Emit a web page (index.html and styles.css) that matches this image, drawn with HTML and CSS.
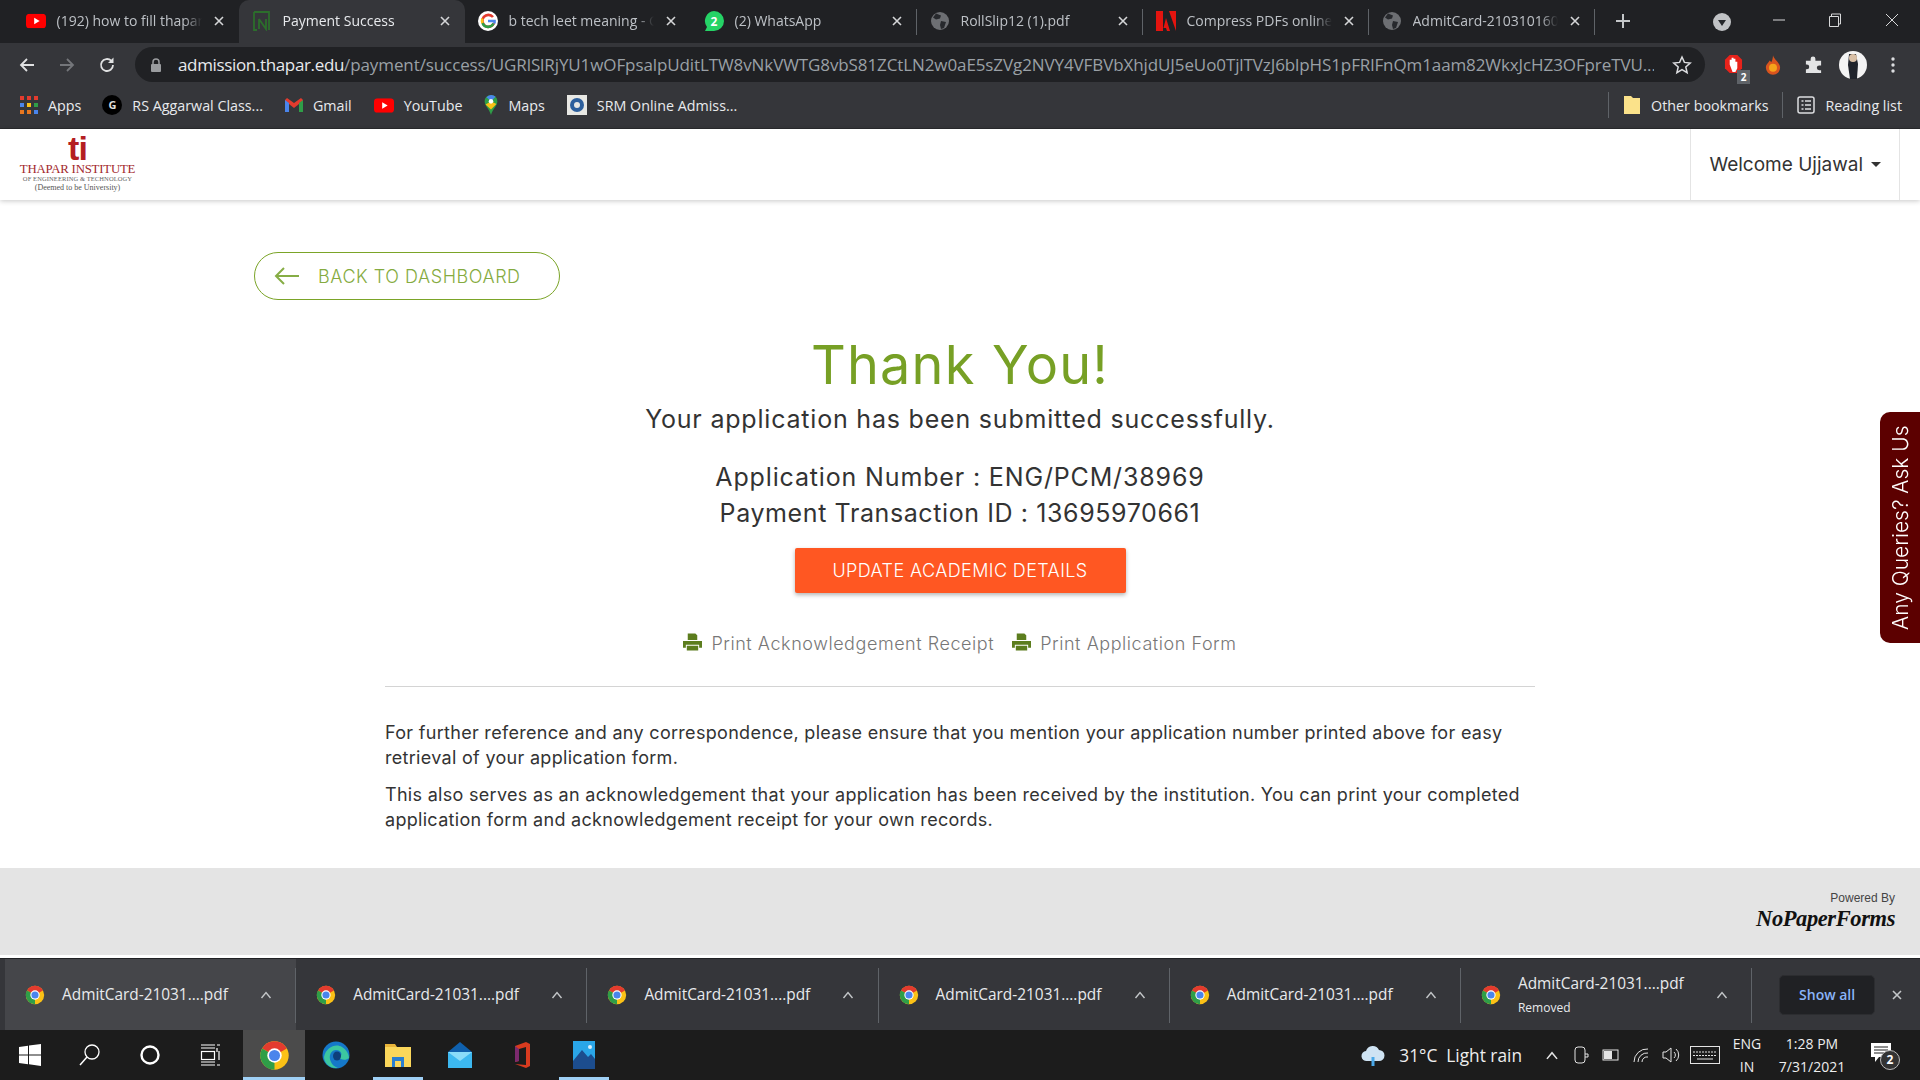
FILE: index.html
```html
<!DOCTYPE html>
<html lang="en">
<head>
<meta charset="utf-8">
<title>Payment Success</title>
<link rel="stylesheet" href="styles.css">
</head>
<body>
<svg class="defs" width="0" height="0" aria-hidden="true">
  <defs>
    <symbol id="chrome" viewBox="0 0 24 24">
      <circle cx="12" cy="12" r="11" fill="#fbc116"/>
      <path d="M12 12L2.47 6.5A11 11 0 0 1 21.53 6.5Z" fill="#e33b2e"/>
      <path d="M12 12L12 23A11 11 0 0 1 2.47 6.5Z" fill="#2f9e48"/>
      <circle cx="12" cy="12" r="5.6" fill="#fff"/>
      <circle cx="12" cy="12" r="4.3" fill="#4a85ec"/>
    </symbol>
    <symbol id="globe" viewBox="0 0 20 20">
      <circle cx="10" cy="10" r="9" fill="#6d6f73"/>
      <path d="M6 2.5l5 2-1 3-4 1-3-2zM11 10l5 1-2 6-3 1-1-4z" fill="#27292d"/>
    </symbol>
    <symbol id="printer" viewBox="0 0 20 18">
      <path d="M5 0h8l2 2v5H5zM0 8h20v7h-3v-3H3v3H0zM4 13h12v5H4z" fill="#5c7d1e"/>
    </symbol>
    <symbol id="yt" viewBox="0 0 22 16">
      <rect width="22" height="16" rx="4" fill="#f00"/>
      <path d="M9 4.5l6 3.5-6 3.500z" fill="#fff"/>
    </symbol>
    <symbol id="close" viewBox="0 0 12 12">
      <path d="M2 2l8 8M10 2l-8 8" stroke="currentColor" stroke-width="1.600" fill="none"/>
    </symbol>
    <symbol id="caret" viewBox="0 0 12 8">
      <path d="M1.500 7L6 1.500 10.500 7" stroke="currentColor" stroke-width="1.400" fill="none"/>
    </symbol>
  </defs>
</svg>

<div class="browser">
  <div class="tabstrip">
    <div class="tab">
      <svg class="fav" viewBox="0 0 22 16"><use href="#yt"/></svg>
      <span class="tab-title">(192) how to fill thapar form</span>
      <svg class="tab-x"><use href="#close"/></svg>
    </div>
    <div class="tab tab-active">
      <svg class="fav" viewBox="0 0 18 20"><path d="M1 1h15v18M1 1v18h3M6 8v10M6 8l7 10V8" fill="none" stroke="#2c6e2c" stroke-width="1.800"/></svg>
      <span class="tab-title">Payment Success</span>
      <svg class="tab-x"><use href="#close"/></svg>
    </div>
    <div class="tab">
      <svg class="fav" viewBox="0 0 20 20"><circle cx="10" cy="10" r="10" fill="#fff"/><path d="M15 6a6 6 0 1 0 1 6" fill="none" stroke="#e33b2e" stroke-width="2.600"/><path d="M4.500 12a6 6 0 0 0 11 .5" fill="none" stroke="#2f9e48" stroke-width="2.600"/><path d="M4.500 7.500a6 6 0 0 0 0 4.500" fill="none" stroke="#fbc116" stroke-width="2.600"/><path d="M10 10h6.500v2.500" fill="none" stroke="#4a85ec" stroke-width="2.600"/></svg>
      <span class="tab-title">b tech leet meaning - Google</span>
      <svg class="tab-x"><use href="#close"/></svg>
    </div>
    <div class="tab tab-sep">
      <svg class="fav" viewBox="0 0 20 20"><path d="M10 0a10 10 0 0 1 0 20H1l2-4a10 10 0 0 1 7-16z" fill="#25d366"/><text x="10" y="14.500" class="wa-num">2</text></svg>
      <span class="tab-title">(2) WhatsApp</span>
      <svg class="tab-x"><use href="#close"/></svg>
    </div>
    <div class="tab tab-sep">
      <svg class="fav"><use href="#globe"/></svg>
      <span class="tab-title">RollSlip12 (1).pdf</span>
      <svg class="tab-x"><use href="#close"/></svg>
    </div>
    <div class="tab tab-sep">
      <svg class="fav" viewBox="0 0 20 20"><path d="M0 0h7v20H2.500L0 20zM13 0h7v20zM10 7l4 13h-3l-1-3H7.500z" fill="#e4140f"/></svg>
      <span class="tab-title">Compress PDFs online for free</span>
      <svg class="tab-x"><use href="#close"/></svg>
    </div>
    <div class="tab tab-sep tab-last">
      <svg class="fav"><use href="#globe"/></svg>
      <span class="tab-title">AdmitCard-21031016099.pdf</span>
      <svg class="tab-x"><use href="#close"/></svg>
    </div>
    <svg class="newtab" viewBox="0 0 16 16"><path d="M8 1v14M1 8h14" stroke="#c4c7c9" stroke-width="2"/></svg>
    <div class="winctl">
      <svg class="tabsearch" viewBox="0 0 18 18"><circle cx="9" cy="9" r="9" fill="#c0c2c5"/><path d="M5 7h8l-4 6z" fill="#24262a"/></svg>
      <svg class="wbtn wmin" viewBox="0 0 14 14"><path d="M1 7h12" stroke="#d8d9da" stroke-width="1"/></svg>
      <svg class="wbtn wmax" viewBox="0 0 14 14"><path d="M1.500 3.500h9v10h-9zM3.500 3.500v-2.500h9v10h-2" fill="none" stroke="#d8d9da" stroke-width="1"/></svg>
      <svg class="wbtn wclose" viewBox="0 0 14 14"><path d="M1 1l12 12M13 1L1 13" stroke="#d8d9da" stroke-width="1"/></svg>
    </div>
  </div>

  <div class="toolbar">
    <svg class="nav" viewBox="0 0 18 18"><path d="M16 9H3M9 3L3 9l6 6" fill="none" stroke="#e0e1e2" stroke-width="1.800"/></svg>
    <svg class="nav nav-off" viewBox="0 0 18 18"><path d="M2 9h13M9 3l6 6-6 6" fill="none" stroke="#74767a" stroke-width="1.800"/></svg>
    <svg class="nav" viewBox="0 0 18 18"><path d="M15 9a6 6 0 1 1-1.800-4.300" fill="none" stroke="#e0e1e2" stroke-width="1.800"/><path d="M15.500 1.500v5.500h-5.500z" fill="#e0e1e2"/></svg>
    <div class="omnibox">
      <svg class="lock" viewBox="0 0 12 14"><path d="M3 6V4a3 3 0 0 1 6 0v2" fill="none" stroke="#9a9c9f" stroke-width="1.500"/><rect x="1" y="6" width="10" height="8" rx="1" fill="#9a9c9f"/></svg>
      <div class="url"><span class="url-host">admission.thapar.edu</span>/payment/success/UGRlSlRjYU1wOFpsalpUditLTW8vNkVWTG8vbS81ZCtLN2w0aE5sZVg2NVY4VFBVbXhjdUJ5eUo0TjlTVzJ6blpHS1pFRlFnQm1aam82WkxJcHZ3OFpreTVU...</div>
      <svg class="star" viewBox="0 0 20 20"><path d="M10 2l2.400 5.400 5.800.6-4.400 3.900 1.300 5.800L10 14.700l-5.100 3 1.300-5.800L1.800 8l5.800-.6z" fill="none" stroke="#dcdde0" stroke-width="1.500"/></svg>
    </div>
    <div class="exts">
      <span class="ext ext-badge">
        <svg class="ext-svg" viewBox="0 0 20 22"><path d="M6 1h8l5 5v9l-5 5H6l-5-5V6z" fill="#e8231b"/><path d="M6 11V6h2v4-6h2v6-5h2v6-3h2v7l-2 4H9z" fill="#fff"/></svg>
        <span class="ext-num">2</span>
      </span>
      <span class="ext">
        <svg class="ext-svg ext-small" viewBox="0 0 18 22"><path d="M9 0c1 5 8 8 8 14a8 8 0 0 1-16 0c0-4 3-5 4-8 1 1 2 1 2 2 1-2 2-5 2-8z" fill="#d9541e"/><circle cx="9" cy="14" r="4.500" fill="#f5a31b"/></svg>
      </span>
      <span class="ext">
        <svg class="ext-svg" viewBox="0 0 20 20"><path d="M2 6h5V4a2.500 2.500 0 0 1 5 0v2h6v5h-2a2.500 2.500 0 0 0 0 5h2v3H2v-4h1a2.500 2.500 0 0 0 0-5H2z" fill="#e3e4e5"/></svg>
      </span>
      <span class="ext">
        <svg class="avatar" viewBox="0 0 28 28"><circle cx="14" cy="14" r="14" fill="#f4f4f4"/><path d="M10 3h7l2 10-1 15h-7l-2-14z" fill="#20242c"/><circle cx="14" cy="7" r="4" fill="#d9c0a6"/></svg>
      </span>
      <svg class="dots" viewBox="0 0 4 18"><circle cx="2" cy="3" r="1.700" fill="#dcdde0"/><circle cx="2" cy="9" r="1.700" fill="#dcdde0"/><circle cx="2" cy="15" r="1.700" fill="#dcdde0"/></svg>
    </div>
  </div>

  <div class="bookmarks">
    <div class="bm bm-apps">
      <svg class="bm-ico" viewBox="0 0 18 18"><g fill="#e33b2e"><rect width="4" height="4"/><rect x="7" width="4" height="4"/><rect x="14" width="4" height="4"/></g><g fill="#4a85ec"><rect y="7" width="4" height="4"/></g><g fill="#fbc116"><rect x="7" y="7" width="4" height="4"/></g><g fill="#2f9e48"><rect x="14" y="7" width="4" height="4"/></g><g fill="#e9771f"><rect y="14" width="4" height="4"/><rect x="7" y="14" width="4" height="4"/></g><rect x="14" y="14" width="4" height="4" fill="#4a85ec"/></svg>
      <span>Apps</span>
    </div>
    <div class="bm">
      <span class="bm-g">G</span>
      <span>RS Aggarwal Class...</span>
    </div>
    <div class="bm">
      <svg class="bm-ico" viewBox="0 0 18 14"><path d="M0 2v12h4V6l5 4 5-4v8h4V2l-2-2-7 5-7-5z" fill="#e33b2e"/><path d="M0 2v12h4V5z" fill="#4a85ec"/><path d="M14 5v9h4V2z" fill="#2f9e48"/></svg>
      <span>Gmail</span>
    </div>
    <div class="bm">
      <svg class="bm-ico bm-yt" viewBox="0 0 22 16"><use href="#yt"/></svg>
      <span>YouTube</span>
    </div>
    <div class="bm">
      <svg class="bm-ico bm-map" viewBox="0 0 14 22"><path d="M7 0a7 7 0 0 1 7 7c0 5-5 8-7 15C5 15 0 12 0 7a7 7 0 0 1 7-7z" fill="#2f9e48"/><path d="M2 2.500A7 7 0 0 1 7 0a7 7 0 0 1 5 2L7 7z" fill="#4a85ec"/><path d="M1 10.500L7 7l6 3-6 6z" fill="#fbc116"/><circle cx="7" cy="7" r="2.500" fill="#fff"/></svg>
      <span>Maps</span>
    </div>
    <div class="bm">
      <svg class="bm-ico bm-srm" viewBox="0 0 20 20"><rect width="20" height="20" fill="#e8e8e4"/><circle cx="10" cy="10" r="7" fill="#2d5f9c"/><circle cx="10" cy="10" r="3" fill="#e8e8e4"/></svg>
      <span>SRM Online Admiss...</span>
    </div>
    <div class="bm-right">
      <span class="bm-sep"></span>
      <div class="bm">
        <svg class="bm-ico" viewBox="0 0 16 18"><path d="M0 0h7l2 2h7v16H0z" fill="#fbe28a"/></svg>
        <span>Other bookmarks</span>
      </div>
      <span class="bm-sep"></span>
      <div class="bm">
        <svg class="bm-ico" viewBox="0 0 18 18"><rect x="1" y="1" width="16" height="16" rx="2" fill="none" stroke="#dcdde0" stroke-width="1.500"/><path d="M4.500 5h2M8 5h6M4.500 9h2M8 9h6M4.500 13h2M8 13h6" stroke="#dcdde0" stroke-width="1.500"/></svg>
        <span>Reading list</span>
      </div>
    </div>
  </div>

  <div class="page">
    <header class="site-head">
      <div class="logo">
        <span class="logo-ti">ti</span>
        <span class="logo-name">THAPAR INSTITUTE</span>
        <span class="logo-sub">OF ENGINEERING &amp; TECHNOLOGY</span>
        <span class="logo-deemed">(Deemed to be University)</span>
      </div>
      <div class="welcome">Welcome Ujjawal <span class="welcome-caret"></span></div>
    </header>

    <main class="main">
      <div class="back-row">
        <a class="back-btn">
          <svg class="back-arrow" viewBox="0 0 26 20"><path d="M26 10H3M11 2l-8 8 8 8" fill="none" stroke="#86ad45" stroke-width="2"/></svg>
          <span>BACK TO DASHBOARD</span>
        </a>
      </div>
      <h1 class="thanks">Thank You!</h1>
      <p class="sub">Your application has been submitted successfully.</p>
      <div class="ids">
        <p class="id-line">Application Number : ENG/PCM/38969</p>
        <p class="id-line id-pay">Payment Transaction ID : 13695970661</p>
      </div>
      <a class="update-btn">UPDATE ACADEMIC DETAILS</a>
      <div class="prints">
        <a class="print-link"><svg class="print-ico"><use href="#printer"/></svg>Print Acknowledgement Receipt</a>
        <a class="print-link"><svg class="print-ico"><use href="#printer"/></svg>Print Application Form</a>
      </div>
      <hr class="rule">
      <div class="notes">
        <p>For further reference and any correspondence, please ensure that you mention your application number printed above for easy retrieval of your application form.</p>
        <p>This also serves as an acknowledgement that your application has been received by the institution. You can print your completed application form and acknowledgement receipt for your own records.</p>
      </div>
    </main>

    <footer class="site-foot">
      <div class="powered">
        <span class="powered-by">Powered By</span>
        <span class="npf">NoPaperForms</span>
      </div>
    </footer>

    <a class="ask-tab">Any Queries? Ask Us</a>
  </div>

  <div class="downloads">
    <div class="dl dl-hover"><svg class="dl-ico"><use href="#chrome"/></svg><span class="dl-name">AdmitCard-21031....pdf</span><svg class="dl-caret"><use href="#caret"/></svg></div>
    <div class="dl"><svg class="dl-ico"><use href="#chrome"/></svg><span class="dl-name">AdmitCard-21031....pdf</span><svg class="dl-caret"><use href="#caret"/></svg></div>
    <div class="dl"><svg class="dl-ico"><use href="#chrome"/></svg><span class="dl-name">AdmitCard-21031....pdf</span><svg class="dl-caret"><use href="#caret"/></svg></div>
    <div class="dl"><svg class="dl-ico"><use href="#chrome"/></svg><span class="dl-name">AdmitCard-21031....pdf</span><svg class="dl-caret"><use href="#caret"/></svg></div>
    <div class="dl"><svg class="dl-ico"><use href="#chrome"/></svg><span class="dl-name">AdmitCard-21031....pdf</span><svg class="dl-caret"><use href="#caret"/></svg></div>
    <div class="dl dl-last"><svg class="dl-ico"><use href="#chrome"/></svg><span class="dl-stack"><span class="dl-name">AdmitCard-21031....pdf</span><span class="dl-status">Removed</span></span><svg class="dl-caret"><use href="#caret"/></svg></div>
    <a class="show-all">Show all</a>
    <svg class="dl-close"><use href="#close"/></svg>
  </div>

  <div class="taskbar">
    <div class="tb-sys">
      <svg class="tb-sys-ico" viewBox="0 0 22 22"><path d="M0 3l9-1.300V10.500H0zM10 1.500L22 0v10.500H10zM0 11.500h9v8.800L0 19zM10 11.500h12V22l-12-1.700z" fill="#fff"/></svg>
    </div>
    <div class="tb-sys">
      <svg class="tb-sys-ico" viewBox="0 0 22 22"><circle cx="13" cy="8" r="7" fill="none" stroke="#fff" stroke-width="1.300"/><path d="M8 13l-7 8" stroke="#fff" stroke-width="1.500"/></svg>
    </div>
    <div class="tb-sys">
      <svg class="tb-sys-ico" viewBox="0 0 22 22"><circle cx="11" cy="11" r="8.500" fill="none" stroke="#fff" stroke-width="2.400"/></svg>
    </div>
    <div class="tb-sys">
      <svg class="tb-sys-ico" viewBox="0 0 22 22"><path d="M2 1h14M18 1h3M2 21h14M18 21h3M2 4h14M18 4v4M2 18h14" stroke="#fff" stroke-width="1.200" fill="none"/><rect x="2.500" y="7.500" width="13" height="8" fill="none" stroke="#fff" stroke-width="1.200"/><path d="M20 7v9" stroke="#fff" stroke-width="1.200"/></svg>
    </div>
    <div class="tb-app tb-active tb-open"><svg class="tb-app-ico tb-chrome"><use href="#chrome"/></svg></div>
    <div class="tb-app">
      <svg class="tb-app-ico" viewBox="0 0 28 28"><circle cx="14" cy="14" r="13.500" fill="#1578c9"/><path d="M2 16c2-10 12-14 18-10 5 3 7 8 7 11-3 3-9 2-10-1 4-1 3-7-3-7-5 0-8 6-5 12 1 3 4 5 7 6-8 1-14-5-14-11z" fill="#3cc7a0"/><ellipse cx="15" cy="15" rx="4" ry="4.500" fill="#0e3e7b"/></svg>
    </div>
    <div class="tb-app tb-open">
      <svg class="tb-app-ico" viewBox="0 0 28 28"><path d="M1 3h10l2 3h14v20H1z" fill="#e8b43a"/><rect x="1" y="6" width="26" height="20" fill="#fbd75b"/><path d="M8 26v-10h12v10h-3v-6h-6v6z" fill="#2a7fd1"/></svg>
    </div>
    <div class="tb-app">
      <svg class="tb-app-ico" viewBox="0 0 28 28"><path d="M14 1l12 10H2z" fill="#0f60ad"/><rect x="2" y="11" width="24" height="16" fill="#3cb8f0"/><path d="M2 11l12 9 12-9z" fill="#8adcf9"/></svg>
    </div>
    <div class="tb-app">
      <svg class="tb-app-ico" viewBox="0 0 28 28"><path d="M7 5l11-4 4 2v22l-4 2-11-4 11 1V6l-7 2v12l-4 1z" fill="#d83b1f"/><path d="M7 5l4 3v12l-4 1z" fill="#7c2a6e"/></svg>
    </div>
    <div class="tb-app tb-open">
      <svg class="tb-app-ico" viewBox="0 0 28 28"><rect x="3" y="0" width="22" height="28" fill="#2aa6e8"/><path d="M3 20l9-11 6 7 3-3 4 5v10H3z" fill="#1c4d8e"/><circle cx="20" cy="6" r="2" fill="#d8eefb"/></svg>
    </div>
    <div class="tray">
      <svg class="tray-cloud" viewBox="0 0 26 24"><path d="M7 18a5 5 0 0 1-1-10 7 7 0 0 1 13-1 5.500 5.500 0 0 1 0 11z" fill="#cfe3f3"/><path d="M13 14v9" stroke="#4aa8e8" stroke-width="3"/></svg>
      <span class="tray-weather">31°C&nbsp; Light rain</span>
      <svg class="tray-caret"><use href="#caret"/></svg>
      <svg class="tray-ico" viewBox="0 0 18 18"><rect x="3" y="1" width="10" height="16" rx="3" fill="none" stroke="#e4e4e4"/><path d="M13 8h3v3h-3" fill="none" stroke="#e4e4e4"/></svg>
      <svg class="tray-ico" viewBox="0 0 18 18"><rect x="1" y="4" width="15" height="10" fill="none" stroke="#e4e4e4"/><rect x="2" y="5" width="8" height="8" fill="#e4e4e4"/></svg>
      <svg class="tray-ico" viewBox="0 0 18 18"><path d="M2 16a13 13 0 0 1 14-13M6 16a9 9 0 0 1 10-9M10 16a5 5 0 0 1 6-5" fill="none" stroke="#e4e4e4"/></svg>
      <svg class="tray-ico" viewBox="0 0 18 18"><path d="M1 6h3l5-4v14l-5-4H1zM12 6a4 4 0 0 1 0 6M14 3a8 8 0 0 1 0 12" fill="none" stroke="#e4e4e4"/></svg>
      <svg class="tray-kbd" viewBox="0 0 30 18"><rect x=".5" y=".5" width="29" height="17" fill="none" stroke="#e4e4e4"/><path d="M3 6h24M3 9.500h24" stroke="#e4e4e4" stroke-dasharray="2 1"/><path d="M7 13h16" stroke="#e4e4e4"/></svg>
      <div class="tray-lang"><span>ENG</span><span>IN</span></div>
      <div class="tray-clock"><span>1:28 PM</span><span>7/31/2021</span></div>
      <div class="tray-note">
        <svg class="tray-note-ico" viewBox="0 0 20 20"><path d="M0 0h20v14H8l-4 5v-5H0z" fill="#fff"/><path d="M3 4h14M3 7h14M3 10h14" stroke="#1c1c1c"/></svg>
        <span class="tray-badge">2</span>
      </div>
    </div>
  </div>
</div>
</body>
</html>
```
FILE: styles.css
```css
* { box-sizing: border-box; }
html, body { margin: 0; height: 100%; overflow: hidden; }
body { font-family: "Open Sans", "Noto Sans", sans-serif; background: #fff; }
.defs { position: absolute; }
p, h1 { margin: 0; }

.browser { width: 1920px; height: 1080px; display: flex; flex-direction: column; }

/* tab strip */
.tabstrip { height: 43px; background: #202124; display: flex; padding-left: 13px; color: #bdc1c6; font-size: 14px; flex: none; }
.tab { width: 226px; height: 43px; display: flex; align-items: center; padding: 0 0 2px 13px; position: relative; }
.tab-active { background: #35363a; border-radius: 10px 10px 0 0; color: #e8eaed; }
.tab-sep::after { content: ""; position: absolute; right: 0; top: 9px; height: 26px; width: 1px; background: #5f6368; }
.fav { width: 20px; height: 20px; flex: none; }
.wa-num { font: 700 12px "Open Sans", sans-serif; fill: #fff; text-anchor: middle; }
.tab-title { width: 145px; margin-left: 10.500px; white-space: nowrap; overflow: hidden; -webkit-mask-image: linear-gradient(to right, #000 88%, transparent); mask-image: linear-gradient(to right, #000 88%, transparent); }
.tab-x { width: 12px; height: 12px; margin-left: 11.500px; color: #d5d6d8; flex: none; }
.newtab { width: 16px; height: 16px; margin: 13px 0 0 20px; flex: none; }
.winctl { display: flex; align-items: center; margin-left: 82px; height: 43px; }
.tabsearch { width: 18px; height: 18px; }
.wbtn { width: 14px; height: 14px; margin-top: -4px; }
.wmin { margin-left: 41px; }
.wmax { margin-left: 42px; }
.wclose { margin-left: 43px; }

/* toolbar */
.toolbar { height: 43px; background: #35363a; display: flex; align-items: center; padding-left: 18px; flex: none; }
.nav { width: 18px; height: 18px; margin-right: 22px; flex: none; }
.omnibox { margin-left: -3px; width: 1570px; height: 35px; background: #202124; border-radius: 18px; display: flex; align-items: center; padding-left: 15px; flex: none; color: #9aa0a6; }
.lock { width: 12px; height: 14px; flex: none; }
.url { width: 1476px; margin-left: 16px; font-size: 17px; white-space: nowrap; overflow: hidden; letter-spacing: -.1px; }
.url-host { color: #e8eaed; letter-spacing: -.35px; }
.star { width: 20px; height: 20px; margin-left: 18px; flex: none; }
.exts { display: flex; align-items: center; margin-left: 8px; flex: none; }
.ext { width: 40px; height: 30px; display: flex; align-items: center; justify-content: center; position: relative; }
.ext-svg { width: 19px; height: 21px; }
.ext-small { width: 16px; height: 20px; }
.ext-num { position: absolute; right: 3px; bottom: -4px; width: 13px; height: 14px; background: #5f6368; color: #fff; font-size: 10px; font-weight: 700; line-height: 14px; text-align: center; }
.avatar { width: 28px; height: 28px; }
.dots { width: 4px; height: 18px; margin-left: 18px; }

/* bookmarks */
.bookmarks { height: 43px; background: #35363a; display: flex; align-items: center; padding: 0 0 4px 20px; gap: 22px; color: #e8eaed; font-size: 14.300px; flex: none; border-bottom: 1px solid #2a2b2e; }
.bm { display: flex; align-items: center; gap: 10px; white-space: nowrap; }
.bm-apps { margin-right: -1px; }
.bm-ico { width: 18px; height: 18px; flex: none; }
.bm-yt { width: 20px; height: 15px; }
.bm-map { width: 14px; height: 20px; }
.bm-srm { width: 20px; height: 20px; }
.bm-g { width: 20px; height: 20px; border-radius: 50%; background: #000; color: #ddd; font-size: 11px; font-weight: 700; text-align: center; line-height: 20px; }
.bm-right { margin-left: auto; display: flex; align-items: center; gap: 14px; padding-right: 18px; }
.bm-sep { width: 1px; height: 26px; background: #5f6368; }

/* page */
.page { flex: 1; position: relative; display: flex; flex-direction: column; min-height: 0; background: #fff; font-family: Inter, "Open Sans", sans-serif; color: #333; }
.site-head { height: 71px; display: flex; justify-content: space-between; align-items: stretch; background: #fff; box-shadow: 0 1px 5px rgba(0,0,0,.22); flex: none; padding: 0 20px 0 19px; position: relative; z-index: 1; }
.logo { display: flex; flex-direction: column; align-items: center; width: 117px; padding-top: 5px; font-family: "Liberation Serif", serif; }
.logo-ti { font: 700 34px/29px "Liberation Sans", sans-serif; color: #b41e22; letter-spacing: -1px; }
.logo-name { font-size: 12.800px; line-height: 12px; color: #a3282c; white-space: nowrap; letter-spacing: -.2px; }
.logo-sub { font-size: 6.500px; line-height: 8px; color: #666; white-space: nowrap; letter-spacing: .1px; }
.logo-deemed { font-size: 8px; line-height: 9px; color: #555; white-space: nowrap; }
.welcome { display: flex; align-items: center; gap: 6px; padding: 0 18px; border-left: 1px solid #e4e4e4; border-right: 1px solid #e4e4e4; font-size: 19px; color: #333; }
.welcome-caret { width: 0; height: 0; border-left: 5px solid transparent; border-right: 5px solid transparent; border-top: 5px solid #333; margin-left: 2px; }

.main { flex: 1; display: flex; flex-direction: column; align-items: center; min-height: 0; }
.back-row { align-self: stretch; padding: 52px 0 0 254px; }
.back-btn { width: 306px; height: 48px; border: 1.500px solid #7ba428; border-radius: 24px; display: flex; align-items: center; padding-left: 18px; gap: 19px; color: #85ab40; font-size: 18px; font-weight: 300; letter-spacing: .55px; }
.back-arrow { width: 26px; height: 20px; flex: none; }
.thanks { font-size: 54px; line-height: 60px; font-weight: 400; color: #77a025; margin-top: 35px; letter-spacing: 1.200px; }
.sub { font-size: 25px; line-height: 30px; margin-top: 9px; letter-spacing: .8px; color: #333; }
.ids { margin-top: 25px; text-align: center; }
.id-line { font-size: 25px; line-height: 36px; letter-spacing: .85px; }
.id-pay { letter-spacing: .6px; }
.update-btn { margin-top: 17px; width: 331px; height: 45px; background: #ff5722; color: #fff; border-radius: 2px; font-size: 18px; font-weight: 300; line-height: 45px; text-align: center; letter-spacing: .4px; box-shadow: 0 2px 4px rgba(0,0,0,.3); }
.prints { margin-top: 35px; height: 30px; display: flex; align-items: center; gap: 18px; color: #777; font-size: 18px; font-weight: 300; letter-spacing: .55px; }
.print-link { display: flex; align-items: center; gap: 9px; white-space: nowrap; }
.print-ico { width: 19px; height: 18px; margin-top: -3px; }
.rule { width: 1150px; height: 1px; border: 0; background: #d4d4d4; margin: 28px 0 0; flex: none; }
.notes { width: 1150px; margin-top: 33px; font-size: 18px; line-height: 25px; color: #333; letter-spacing: .3px; }
.notes p + p { margin-top: 12px; }

.site-foot { height: 87px; background: #e4e4e4; display: flex; justify-content: flex-end; align-items: center; padding-right: 25px; flex: none; margin-bottom: 3px; }
.powered { display: flex; flex-direction: column; align-items: flex-end; }
.powered-by { font: 12px/14px "Liberation Sans", sans-serif; color: #444; }
.npf { font: italic 700 22.500px/28px "Liberation Serif", serif; color: #111; letter-spacing: -.4px; }
.ask-tab { position: absolute; right: 0; top: 283px; width: 40px; height: 231px; background: #5c0000; color: #fff; writing-mode: vertical-rl; transform: rotate(180deg); border-radius: 0 10px 10px 0; font-size: 21px; font-weight: 300; display: flex; align-items: center; justify-content: center; white-space: nowrap; }

/* downloads */
.downloads { height: 72px; background: #35363a; border-top: 1px solid #202124; display: flex; align-items: center; padding-left: 5px; color: #e8eaed; font-size: 15.400px; flex: none; }
.dl { width: 291.200px; height: 100%; display: flex; align-items: center; padding-left: 20px; position: relative; flex: none; }
.dl::after { content: ""; position: absolute; right: 0; top: 9px; bottom: 7px; width: 1px; background: #5f6368; }
.dl-hover { background: #45464a; }
.dl-ico { width: 20px; height: 20px; flex: none; }
.dl-name { white-space: nowrap; }
.dl > .dl-name, .dl-stack { margin-left: 17px; width: 195px; }
.dl-stack { display: flex; flex-direction: column; gap: 6px; }
.dl-status { font-size: 12px; line-height: 16px; }
.dl-caret { width: 12px; height: 8px; margin-left: 3px; color: #c4c7c9; flex: none; }
.show-all { width: 96px; height: 40px; margin-left: 27px; background: #202124; border: 1px solid #2c2d30; border-radius: 5px; color: #8ab4f8; font-size: 14px; font-weight: 600; display: flex; align-items: center; justify-content: center; flex: none; }
.dl-close { width: 12px; height: 12px; margin-left: 16px; color: #c4c7c9; flex: none; }

/* taskbar */
.taskbar { height: 50px; background: #1c1c1c; display: flex; color: #eee; flex: none; }
.tb-sys { width: 60px; display: flex; align-items: center; justify-content: center; flex: none; }
.tb-sys-ico { width: 22px; height: 22px; }
.tb-app { width: 62px; display: flex; align-items: center; justify-content: center; position: relative; flex: none; }
.tb-active { background: #4b4b4b; margin-left: 3px; }
.tb-open::after { content: ""; position: absolute; left: 6px; right: 6px; bottom: 0; height: 3px; background: #9fd0f5; }
.tb-active::after { left: 0; right: 0; }
.tb-app-ico { width: 28px; height: 28px; }
.tb-chrome { width: 31px; height: 31px; }
.tray { margin-left: auto; display: flex; align-items: center; padding-right: 25px; font-size: 17.300px; }
.tray-cloud { width: 26px; height: 24px; flex: none; }
.tray-weather { margin-left: 13px; white-space: nowrap; }
.tray-caret { width: 16px; height: 9px; margin-left: 22px; color: #e4e4e4; }
.tray-ico { width: 18px; height: 18px; margin-left: 12px; flex: none; }
.tray-kbd { width: 30px; height: 18px; margin-left: 10px; }
.tray-lang { width: 54px; display: flex; flex-direction: column; align-items: center; font-size: 14px; line-height: 23px; }
.tray-clock { width: 76px; display: flex; flex-direction: column; align-items: center; font-size: 14px; line-height: 23px; white-space: nowrap; }
.tray-note { position: relative; width: 24px; margin-left: 21px; height: 24px; }
.tray-note-ico { width: 20px; height: 20px; }
.tray-badge { position: absolute; left: 9px; top: 7px; width: 20px; height: 20px; border-radius: 50%; background: #333; border: 1px solid #bbb; color: #fff; font-size: 12px; font-weight: 700; line-height: 18px; text-align: center; }
```
